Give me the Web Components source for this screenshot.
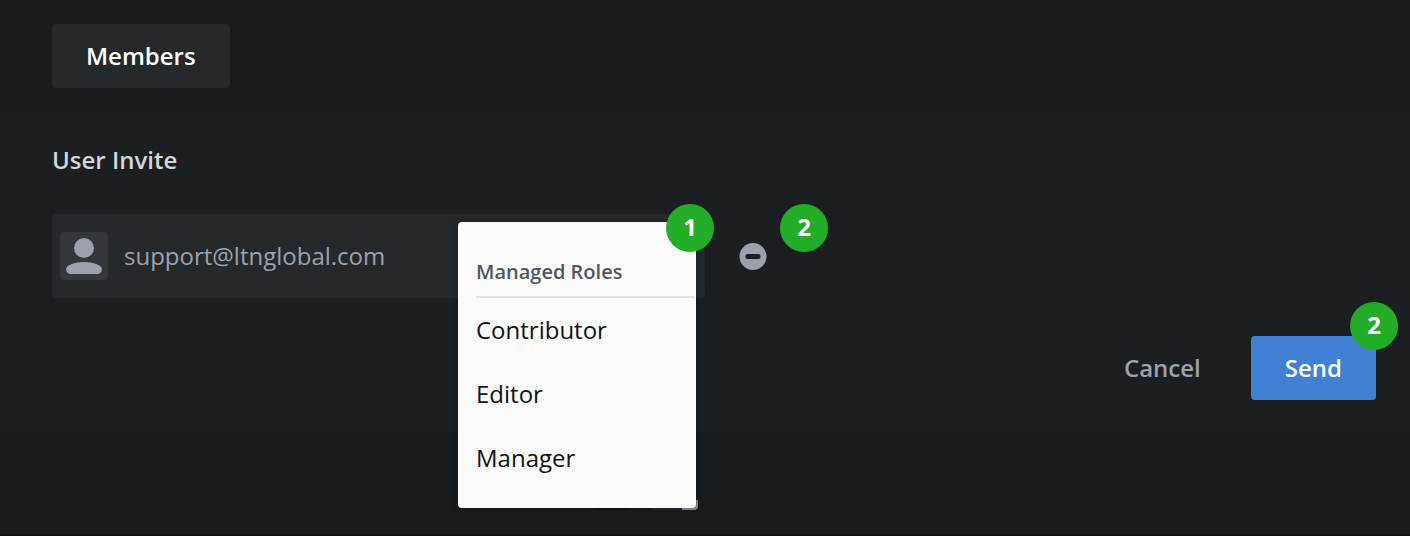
<!DOCTYPE html>
<html lang="en">
<head>
<meta charset="utf-8">
<title>User Invite</title>
<style>
    body {
        margin: 0;
        background: #171b1d;
        font-family: "Open Sans", "Noto Sans", sans-serif;
        font-size: 24px;
        line-height: 32px;
        color: #d4d6d7;
    }
</style>
</head>
<body>
<members-page>
    <tab-button slot="tabs">Members</tab-button>
    <invite-panel>
        <span slot="title">User Invite</span>
        <invite-row slot="invites">
            <span slot="email">support@ltnglobal.com</span>
            <role-menu slot="roles">
                <span slot="title">Managed Roles</span>
                <role-option>Contributor</role-option>
                <role-option>Editor</role-option>
                <role-option>Manager</role-option>
            </role-menu>
            <step-badge slot="role-step">1</step-badge>
            <step-badge slot="remove-step">2</step-badge>
        </invite-row>
        <action-button slot="actions">Cancel</action-button>
        <action-button slot="actions" primary>Send<step-badge slot="badge">2</step-badge></action-button>
    </invite-panel>
</members-page>

<script>
/* || Shared base */
class TemplateElement extends HTMLElement {
    constructor() {
        super();
        this.attachShadow( {mode: "open"} );
        this.shadowRoot.appendChild(this.constructor.template.content.cloneNode(true));
    }
}

function makeTemplate(html) {
    const template = document.createElement("template");
    template.innerHTML = html;
    return template;
}


/* || Page and panel */
class MembersPage extends TemplateElement {
    static template = makeTemplate(`
        <style>
            :host {
                display: flex;
                flex-direction: column;
                box-sizing: border-box;
                min-height: 100vh;
                border-bottom: 2px solid #131114;
            }
            nav {
                display: flex;
                gap: 16px;
                padding: 24px 52px;
            }
        </style>
        <nav><slot name=tabs></slot></nav>
        <main><slot></slot></main>
    `);
}
customElements.define("members-page", MembersPage);

class TabButton extends TemplateElement {
    static template = makeTemplate(`
        <style>
            :host {
                display: block;
            }
            button {
                padding: 16px 34px;
                border: 0;
                border-radius: 4px;
                background: #25292c;
                color: #fff;
                font: inherit;
                font-weight: 600;
            }
        </style>
        <button type=button><slot></slot></button>
    `);
}
customElements.define("tab-button", TabButton);

class InvitePanel extends TemplateElement {
    static template = makeTemplate(`
        <style>
            :host {
                display: block;
                background: #1b1f22;
                padding: 32px 34px 32px 52px;
            }
            h2 {
                margin: 0 0 38px;
                font-size: 24px;
                font-weight: 600;
            }
            footer {
                display: flex;
                justify-content: flex-end;
                gap: 16px;
                margin-top: 38px;
            }
        </style>
        <h2><slot name=title></slot></h2>
        <slot name=invites></slot>
        <footer><slot name=actions></slot></footer>
    `);
}
customElements.define("invite-panel", InvitePanel);


/* || Invite row */
class InviteRow extends TemplateElement {
    static template = makeTemplate(`
        <style>
            :host {
                display: flex;
                align-items: center;
                gap: 32px;
                color: #9ca1ab;
            }
            .field {
                position: relative;
                display: flex;
                align-items: center;
                gap: 16px;
                flex: 0 1 637px;
                padding: 18px 8px;
                border-radius: 4px;
                background: #25292c;
            }
            .avatar {
                width: 48px;
                height: 48px;
                border-radius: 4px;
                background: #33363b;
            }
            ::slotted([slot=roles]) {
                position: absolute;
                top: 8px;
                right: 9px;
                z-index: 1;
            }
            ::slotted([slot=role-step]) {
                position: absolute;
                top: -10px;
                right: -9px;
                z-index: 2;
            }
            .remove {
                position: relative;
            }
            button {
                display: block;
                padding: 0;
                border: 0;
                background: none;
                color: inherit;
            }
            svg {
                display: block;
            }
            ::slotted([slot=remove-step]) {
                position: absolute;
                left: 43px;
                bottom: 20px;
            }
        </style>
        <div class=field>
            <svg class=avatar viewBox="0 0 48 48" fill="currentColor" aria-hidden="true">
                <circle cx="24" cy="16" r="10"/>
                <path d="M24 30c10 0 18 3.300 18 7.500 0 1.900-1.300 3.500-3.500 4.500h-29C7.300 41 6 39.400 6 37.500 6 33.300 14 30 24 30z"/>
            </svg>
            <slot name=email></slot>
            <slot name=roles></slot>
            <slot name=role-step></slot>
        </div>
        <div class=remove>
            <button type=button aria-label="Remove">
                <svg width="32" height="32" viewBox="0 0 32 32" aria-hidden="true">
                    <circle cx="16" cy="16.500" r="13.500" fill="currentColor"/>
                    <rect x="8.500" y="14" width="15" height="5" rx="2" fill="#1b1f22"/>
                </svg>
            </button>
            <slot name=remove-step></slot>
        </div>
    `);
}
customElements.define("invite-row", InviteRow);


/* || Role menu */
class RoleMenu extends TemplateElement {
    static template = makeTemplate(`
        <style>
            :host {
                display: block;
                width: 238px;
                color: #111314;
            }
            /* edge of the list underneath, showing past the corner */
            :host::before {
                content: "";
                position: absolute;
                right: -2px;
                bottom: -2px;
                z-index: -1;
                width: 104px;
                height: 10px;
                border-radius: 0 0 4px 0;
                background: linear-gradient(to right,
                    #111416 32px, transparent 32px 58px,
                    #25292c 58px 88px, #898d94 88px);
            }
            .sheet {
                padding: 32px 2px 18px 18px;
                border-radius: 4px;
                background: #fafafa;
                box-shadow: 0 0 6px rgba(0, 0, 0, 0.3);
            }
            h3 {
                margin: 0;
                padding-bottom: 6px;
                border-bottom: 2px solid #e2e2e2;
                color: #505760;
                font-size: 20px;
                font-weight: 600;
                line-height: 36px;
            }
        </style>
        <div class=sheet>
            <h3><slot name=title></slot></h3>
            <div role=menu><slot></slot></div>
        </div>
    `);
}
customElements.define("role-menu", RoleMenu);

class RoleOption extends TemplateElement {
    static template = makeTemplate(`
        <style>
            :host {
                display: block;
            }
            button {
                display: block;
                width: 100%;
                padding: 16px 0;
                border: 0;
                background: none;
                color: inherit;
                font: inherit;
                text-align: left;
            }
        </style>
        <button type=button role=menuitem><slot></slot></button>
    `);
}
customElements.define("role-option", RoleOption);


/* || Buttons and badges */
class ActionButton extends TemplateElement {
    static template = makeTemplate(`
        <style>
            :host {
                display: block;
                position: relative;
            }
            button {
                padding: 16px 34px;
                border: 0;
                border-radius: 4px;
                background: none;
                color: #9ca1ab;
                font: inherit;
                font-weight: 600;
            }
            :host([primary]) button {
                background: #4081d3;
                color: #fff;
            }
            ::slotted([slot=badge]) {
                position: absolute;
                top: -34px;
                right: -22px;
            }
        </style>
        <button type=button><slot></slot></button>
        <slot name=badge></slot>
    `);
}
customElements.define("action-button", ActionButton);

class StepBadge extends TemplateElement {
    static template = makeTemplate(`
        <style>
            :host {
                display: block;
                box-sizing: border-box;
                width: 48px;
                height: 48px;
                border-radius: 50%;
                background: #23ac28;
                color: #fff;
                font-weight: 700;
                line-height: 46px;
                text-align: center;
            }
        </style>
        <slot></slot>
    `);
}
customElements.define("step-badge", StepBadge);
</script>
</body>
</html>
